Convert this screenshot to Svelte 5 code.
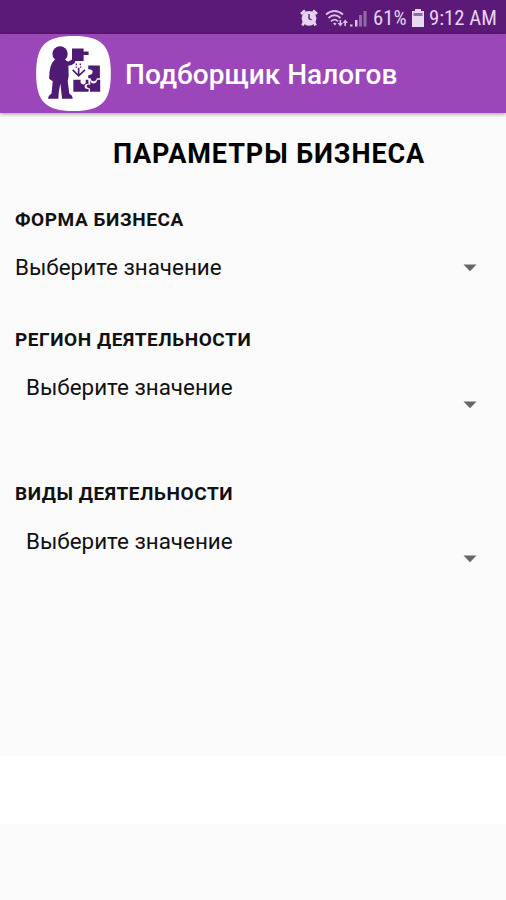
<script>
	const status = { battery: '61%', time: '9:12 AM' };

	const fields = [
		{ id: 'form', label: 'ФОРМА БИЗНЕСА', value: 'Выберите значение' },
		{ id: 'region', label: 'РЕГИОН ДЕЯТЕЛЬНОСТИ', value: 'Выберите значение' },
		{ id: 'kinds', label: 'ВИДЫ ДЕЯТЕЛЬНОСТИ', value: 'Выберите значение' }
	];
</script>

<div class="screen">
	<div class="statusbar">
		<svg class="alarm" viewBox="0 0 18 18" width="18" height="18">
			<path d="M1 5 L5 1.5 M17 5 L13 1.5 M4 13 L2.5 16.5 M14 13 L15.5 16.5" stroke="#e6d3ee" stroke-width="2.8" />
			<circle cx="9" cy="9.3" r="7.4" fill="#e6d3ee" />
			<path d="M9 5 V9.5 L11.5 11" stroke="#5b1a78" stroke-width="1.4" fill="none" />
		</svg>
		<svg class="wifi" viewBox="0 0 24 19" width="24" height="19">
			<g fill="none" stroke="#d9c1e4" stroke-width="1.8">
				<path d="M1 5.5 Q9.5 -1.5 18 5.5" />
				<path d="M3.5 9 Q9.5 3.5 15.5 9" />
				<path d="M6 12.3 Q9.5 9 13 12.3" />
			</g>
			<path d="M8 14.5 Q9.5 13 11.5 14.5 L10 16.5 Z" fill="#d9c1e4" />
			<path d="M14.5 11 h1.6 v3 h1.9 l-2.7 3.5 l-2.7 -3.5 h1.9 z" fill="#d9c1e4" />
			<path d="M19.4 17 h1.6 v-3 h1.9 l-2.7 -3.5 l-2.7 3.5 h1.9 z" fill="#d9c1e4" />
		</svg>
		<svg class="signal" viewBox="0 0 17 17" width="17" height="17">
			<path d="M0 14.5 h2.5 v2 h-2.5 z M5 10 h2.5 v6.5 h-2.5 z" fill="#d9c1e4" />
			<path d="M9 5 h3 v11.5 h-3 z M13.5 1 h3 v15.5 h-3 z" fill="#9468aa" />
		</svg>
		<span class="battery-text">{status.battery}</span>
		<svg class="battery" viewBox="0 0 12 18" width="12" height="18">
			<path d="M3 0 h6 v2 h3 v16 h-12 v-16 h3 z" fill="#e9d9ef" />
			<path d="M1.5 4 h9 v3 h-9 z" fill="#9468aa" />
		</svg>
		<span class="time">{status.time}</span>
	</div>

	<header>
		<svg class="logo" viewBox="33 22 225 226" width="75" height="75">
			<path d="M146 22 C230 22 258 50 258 135 C258 220 230 248 146 248 C61 248 33 220 33 135 C33 50 61 22 146 22 Z" fill="#fff" />
			<g fill="#4e1a73">
				<circle cx="105" cy="76" r="23" />
				<path d="M88 94 L122 94 Q128 101 132 98 L141 93 L141 60 L176 60 L176 69 L191 69 L191 79 L176 79 L176 97 L151 97 L149 103 Q140 111 130 112 L131 142 L128 158 L133 196 Q143 201 143 211 L111 211 L106 165 L101 192 L100 211 L69 211 Q69 202 79 196 L83 158 L72 151 Q72 108 88 94 Z" />
				<path d="M190 111 L225 111 L225 149 L216 149 Q214 158 206 158 Q198 158 197 149 L190 149 L190 140 Q203 140 203 130 Q203 121 190 122 Z" />
				<path d="M145 154 L167 154 Q165 168 175 168 Q185 168 182 154 L190 154 L191 166 Q179 165 179 174 Q179 183 191 181 L191 190 L145 190 Z" />
				<path d="M196 154 Q197 165 206 165 Q215 165 217 154 L226 154 L226 190 L195 190 L195 180 Q185 179 185 173 Q185 166 196 169 Z" />
			</g>
			<path d="M143 124 L161 142 L180 124 M161 118 V142" fill="none" stroke="#4e1a73" stroke-width="5" />
			<path d="M154 105 v5 M166 105 v5 M154 114 v4 M167 114 v4" stroke="#4e1a73" stroke-width="4" />
		</svg>
		<span class="title">Подборщик Налогов</span>
	</header>

	<main>
		<h1>ПАРАМЕТРЫ БИЗНЕСА</h1>
		{#each fields as field}
			<section class={field.id}>
				<h2>{field.label}</h2>
				<div class="select">
					<span>{field.value}</span>
					<svg viewBox="0 0 14 8" width="14" height="8"><path d="M0.5 0.5 H13.5 L7 7.3 Z" fill="#666" /></svg>
				</div>
			</section>
		{/each}
	</main>
	<div class="banner"></div>
</div>

<style>
	:global(body) {
		margin: 0;
		background: #fafafa;
	}

	.screen {
		width: 506px;
		height: 900px;
		overflow: hidden;
		background: #fafafa;
		font-family: Roboto, "Noto Sans", sans-serif;
		color: #111;
	}

	svg {
		display: block;
		flex: none;
	}

	.statusbar {
		box-sizing: border-box;
		height: 34px;
		padding: 2px 8px 0 0;
		display: flex;
		align-items: center;
		justify-content: flex-end;
		background: #5b1a78;
		color: #e6d3ee;
		font-size: 20.7px;
		white-space: nowrap;
	}

	.wifi {
		margin-left: 7px;
	}

	.signal {
		margin-left: 1px;
	}

	.battery-text {
		width: 33px;
		margin-left: 6px;
		font-stretch: 87%;
	}

	.battery {
		margin-left: 6px;
	}

	.time {
		width: 69px;
		margin-left: 5px;
		font-stretch: 87%;
	}

	header {
		position: relative;
		box-sizing: border-box;
		height: 79px;
		padding-left: 36px;
		display: flex;
		align-items: center;
		background: #9b47ba;
		box-shadow: 0 1px 4px rgba(0, 0, 0, 0.4);
	}

	.title {
		margin: 2px 0 0 14px;
		color: #fff;
		font-size: 28px;
		font-weight: 500;
		white-space: nowrap;
	}

	main {
		height: 643px;
		padding-left: 15px;
		box-sizing: border-box;
		overflow: hidden;
	}

	h1 {
		margin: 24px 0 0 98px;
		font-size: 27px;
		line-height: 34px;
		font-weight: 700;
		letter-spacing: 0.92px;
		color: #000;
		white-space: nowrap;
	}

	h2 {
		margin: 0;
		font-size: 19px;
		line-height: 24px;
		font-weight: 700;
		letter-spacing: 0.57px;
		white-space: nowrap;
	}

	section {
		height: 154px;
	}

	.form {
		height: 120px;
		margin-top: 37px;
	}

	.select {
		height: 60px;
		padding: 0 29px 0 11px;
		margin-top: 23px;
		display: flex;
		justify-content: space-between;
		align-items: center;
	}

	.select span {
		align-self: flex-start;
		font-size: 22.4px;
		line-height: 24px;
		white-space: nowrap;
	}

	.form .select {
		height: 26px;
		padding-left: 0;
	}

	.banner {
		height: 68px;
		background: #fff;
	}
</style>
